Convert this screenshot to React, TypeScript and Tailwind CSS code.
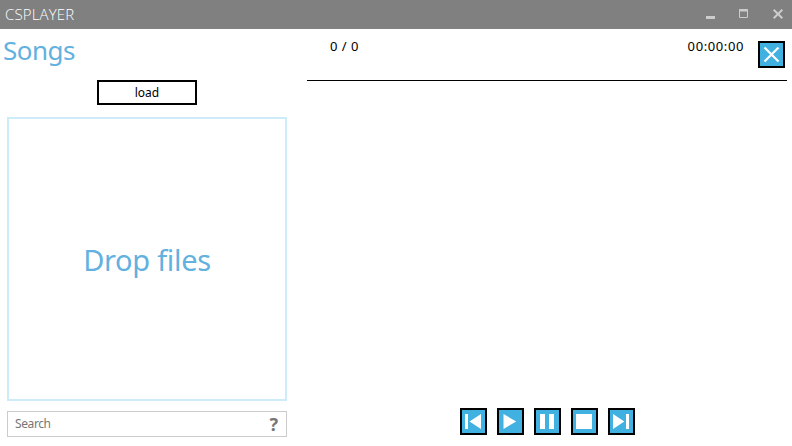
import type { ReactNode } from "react";

function IconButton({ label, children }: { label: string; children: ReactNode }) {
  return (
    <button aria-label={label} className="h-[27px] w-[27px] shrink-0 border-2 border-black bg-[#41b1e1]">
      <svg viewBox="0 0 23 23" className="block h-[23px] w-[23px]" fill="white">
        {children}
      </svg>
    </button>
  );
}

function TitleBar() {
  return (
    <header className="flex h-[29px] justify-between bg-[#808080] pl-[5px]">
      <h1 className="whitespace-nowrap font-['Open_Sans',sans-serif] text-[15px] leading-[29px] font-light tracking-[0.15px] text-white">CSPLAYER</h1>
      <svg width="92" height="29" viewBox="0 0 92 29" fill="none" stroke="#ccc">
        <path d="M6 17.5h9" strokeWidth="3" />
        <path d="M39.5 9.5h8v8h-8z" />
        <path d="M39 10.5h9" strokeWidth="2" />
        <path d="M73.7 9.7l8.6 8.6M82.3 9.7l-8.6 8.6" strokeWidth="2" />
      </svg>
    </header>
  );
}

export default function App() {
  return (
    <div className="flex h-[446px] w-[792px] flex-col overflow-hidden bg-white font-['Noto_Sans',sans-serif]">
      <TitleBar />
      <main className="flex flex-1">
        <section className="flex w-[307px] flex-col pl-[7px]">
          <h2 className="-ml-1 h-[51px] text-[26px] leading-[42px] tracking-[-0.5px] text-[#62b1df]">Songs</h2>
          <button className="ml-[90px] h-[25px] w-[100px] border-2 border-black text-[12px] leading-[21px] text-black">load</button>
          <div className="mt-3 flex h-[284px] w-[280px] items-center justify-center border-2 border-[#cdebf8] pt-[2px] text-[29px] text-[#62b1df]">
            <span className="whitespace-nowrap tracking-[-0.3px]">Drop files</span>
          </div>
          <div className="mt-[10px] flex h-[26px] w-[280px] items-center justify-between border border-[#ccc] px-[7px] text-[12px] text-[#767676]">
            <span className="tracking-[-0.4px]">Search</span>
            <span className="mr-px text-[18px] leading-6 font-bold">?</span>
          </div>
        </section>
        <section className="flex w-[480px] flex-col">
          <div className="flex h-[52px] border-b border-black pr-[2px] pl-[23px] text-[13px] leading-[34px] text-black">
            <span className="tracking-[0.5px]">0 / 0</span>
            <span className="mr-[14px] ml-auto tracking-[0.6px]">00:00:00</span>
            <div className="pt-3">
              <IconButton label="Close">
                <path d="M4.5 4.5L18.5 18.5M18.5 4.5L4.5 18.5" stroke="white" strokeWidth="2.2" />
              </IconButton>
            </div>
          </div>
          <div className="mt-auto mb-[11px] flex justify-center gap-[10px]">
            <IconButton label="Previous">
              <path d="M3 4h3v15H3zM19 4v15L7.5 11.5z" />
            </IconButton>
            <IconButton label="Play">
              <path d="M4.5 4v15l12.7-7.5z" />
            </IconButton>
            <IconButton label="Pause">
              <path d="M4 4h5v15H4zM13 4h5v15h-5z" />
            </IconButton>
            <IconButton label="Stop">
              <path d="M3 4h16v15H3z" />
            </IconButton>
            <IconButton label="Next">
              <path d="M3 4v15l11.3-7.5zM16 4h3v15h-3z" />
            </IconButton>
          </div>
        </section>
      </main>
    </div>
  );
}
